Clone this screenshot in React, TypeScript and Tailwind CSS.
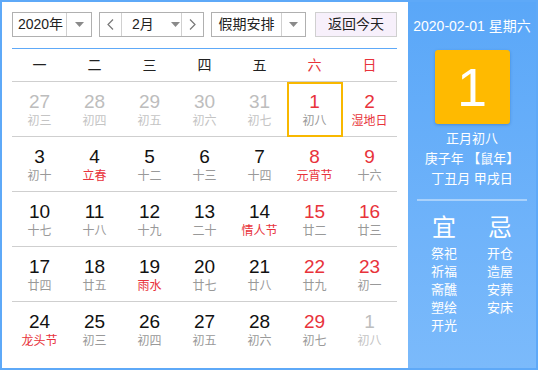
import React from "react";

type Cell = { d: string; l: string; nc: string; lc: string; today?: boolean };

const G = "text-[#bdbdbd]";
const B = "text-[#111]";
const R = "text-[#e8333b]";
const LG = "text-[#999]";
const LR = "text-[#e8333b]";
const LP = "text-[#c4c4c4]";

const rows: Cell[][] = [
  [
    { d: "27", l: "初三", nc: G, lc: LP },
    { d: "28", l: "初四", nc: G, lc: LP },
    { d: "29", l: "初五", nc: G, lc: LP },
    { d: "30", l: "初六", nc: G, lc: LP },
    { d: "31", l: "初七", nc: G, lc: LP },
    { d: "1", l: "初八", nc: R, lc: LG, today: true },
    { d: "2", l: "湿地日", nc: R, lc: LR },
  ],
  [
    { d: "3", l: "初十", nc: B, lc: LG },
    { d: "4", l: "立春", nc: B, lc: LR },
    { d: "5", l: "十二", nc: B, lc: LG },
    { d: "6", l: "十三", nc: B, lc: LG },
    { d: "7", l: "十四", nc: B, lc: LG },
    { d: "8", l: "元宵节", nc: R, lc: LR },
    { d: "9", l: "十六", nc: R, lc: LG },
  ],
  [
    { d: "10", l: "十七", nc: B, lc: LG },
    { d: "11", l: "十八", nc: B, lc: LG },
    { d: "12", l: "十九", nc: B, lc: LG },
    { d: "13", l: "二十", nc: B, lc: LG },
    { d: "14", l: "情人节", nc: B, lc: LR },
    { d: "15", l: "廿二", nc: R, lc: LG },
    { d: "16", l: "廿三", nc: R, lc: LG },
  ],
  [
    { d: "17", l: "廿四", nc: B, lc: LG },
    { d: "18", l: "廿五", nc: B, lc: LG },
    { d: "19", l: "雨水", nc: B, lc: LR },
    { d: "20", l: "廿七", nc: B, lc: LG },
    { d: "21", l: "廿八", nc: B, lc: LG },
    { d: "22", l: "廿九", nc: R, lc: LG },
    { d: "23", l: "初一", nc: R, lc: LG },
  ],
  [
    { d: "24", l: "龙头节", nc: B, lc: LR },
    { d: "25", l: "初三", nc: B, lc: LG },
    { d: "26", l: "初四", nc: B, lc: LG },
    { d: "27", l: "初五", nc: B, lc: LG },
    { d: "28", l: "初六", nc: B, lc: LG },
    { d: "29", l: "初七", nc: R, lc: LG },
    { d: "1", l: "初八", nc: G, lc: LP },
  ],
];

const Caret = () => (
  <svg width="9" height="5" viewBox="0 0 9 5">
    <path d="M0 0 H9 L4.5 5 Z" fill="#8a8a8a" />
  </svg>
);

const Chev = ({ dir }: { dir: "l" | "r" }) => (
  <svg width="7" height="11" viewBox="0 0 7 11">
    <path
      d={dir === "l" ? "M6 0.5 L1 5.5 L6 10.5" : "M1 0.5 L6 5.5 L1 10.5"}
      fill="none"
      stroke="#777"
      strokeWidth="1.2"
    />
  </svg>
);

export default function App() {
  const font = { fontFamily: '"Liberation Sans", "Noto Sans CJK SC", sans-serif' };
  return (
    <div
      className="w-[538px] h-[370px] border-2 border-[#5ea9f8] flex bg-white overflow-hidden"
      style={font}
    >
      <div className="w-[406px] h-full pl-[10px] pr-[11px] pt-[10px] bg-white">
        <div className="flex h-[25px] text-[14px] text-[#222]">
          <div className="w-[80px] flex border border-[#b0b0b0]">
            <div className="w-[54px] flex items-center justify-center pl-[2px] border-r border-[#d0d0d0]">2020年</div>
            <div className="flex-1 flex items-center justify-center"><Caret /></div>
          </div>
          <div className="ml-[7px] w-[105px] flex border border-[#b0b0b0]">
            <div className="w-[22px] flex items-center justify-center border-r border-[#d0d0d0]"><Chev dir="l" /></div>
            <div className="w-[60px] flex items-center pl-[10px] border-r border-[#d0d0d0]">
              <span>2月</span>
              <span className="ml-[17px] flex"><Caret /></span>
            </div>
            <div className="flex-1 flex items-center justify-center"><Chev dir="r" /></div>
          </div>
          <div className="ml-[7px] w-[95px] flex border border-[#b0b0b0]">
            <div className="w-[70px] flex items-center justify-center border-r border-[#d0d0d0]">假期安排</div>
            <div className="flex-1 flex items-center justify-center"><Caret /></div>
          </div>
          <div className="ml-[9px] flex-1 flex items-center justify-center border border-[#d0d0d0] bg-[#f7f0fb]">
            返回今天
          </div>
        </div>
        <div className="mt-[11px] border-t border-[#5ea9f8]" />
        <div className="grid grid-cols-7 h-[33px] border-b border-[#cfcfcf] text-[14px] items-center text-center text-[#222]">
          <div>一</div>
          <div>二</div>
          <div>三</div>
          <div>四</div>
          <div>五</div>
          <div className="text-[#e8333b]">六</div>
          <div className="text-[#e8333b]">日</div>
        </div>
        {rows.map((row, i) => (
          <div
            key={i}
            className={`grid grid-cols-7 h-[55px] ${i < rows.length - 1 ? "border-b border-[#cfcfcf]" : ""}`}
          >
            {row.map((c, j) => (
              <div key={j} className="relative flex flex-col items-center pt-[9px]">
                {c.today && (
                  <span className="absolute left-0 right-[-1px] top-0 bottom-[-1px] border-2 border-[#f8b800]" />
                )}
                <span className={`text-[19px] leading-[22px] ${c.nc}`}>{c.d}</span>
                <span className={`text-[12px] leading-[16px] ${c.lc}`}>{c.l}</span>
              </div>
            ))}
          </div>
        ))}
      </div>
      <div className="flex-1 h-full bg-gradient-to-b from-[#5aa7f8] to-[#7bbafb] text-white flex flex-col items-center">
        <div className="mt-[14px] text-[14px] leading-[20px]">2020-02-01 星期六</div>
        <div className="mt-[14px] w-[75px] h-[74px] rounded-[3px] bg-[#ffba00] shadow-[0_1px_3px_rgba(0,60,140,0.3)] flex items-center justify-center text-[54px] leading-none">
          1
        </div>
        <div className="mt-[5px] text-[13px] leading-[20px] text-center">
          <div>正月初八</div>
          <div>庚子年 【鼠年】</div>
          <div>丁丑月 甲戌日</div>
        </div>
        <div className="mt-[10px] w-[110px] h-[2px] bg-[#a9d1fb]" />
        <div className="w-[112px] grid grid-cols-2 text-center">
          <div className="mt-[12px] text-[24px] leading-[30px]">宜</div>
          <div className="mt-[12px] text-[24px] leading-[30px]">忌</div>
          <div className="mt-[2px] text-[13px] leading-[18px]">
            <div>祭祀</div>
            <div>祈福</div>
            <div>斋醮</div>
            <div>塑绘</div>
            <div>开光</div>
          </div>
          <div className="mt-[2px] text-[13px] leading-[18px]">
            <div>开仓</div>
            <div>造屋</div>
            <div>安葬</div>
            <div>安床</div>
          </div>
        </div>
      </div>
    </div>
  );
}
